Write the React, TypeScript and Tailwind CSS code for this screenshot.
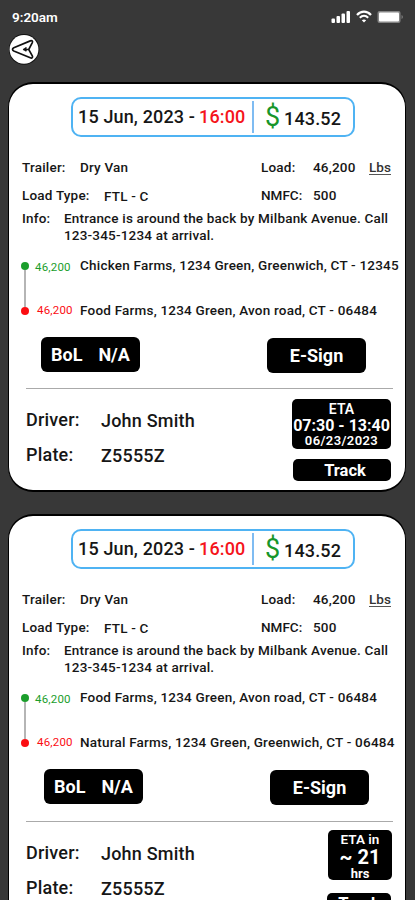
import type { ReactNode } from "react";

type Load = {
  from: string;
  to: string;
  actions: string;
  divider: string;
  eta: ReactNode;
};

const loads: Load[] = [
  {
    from: "Chicken Farms, 1234 Green, Greenwich, CT - 12345",
    to: "Food Farms, 1234 Green, Avon road, CT - 06484",
    actions: "pl-[32px]",
    divider: "mt-[15px]",
    eta: (
      <div className="flex w-[99px] flex-col items-end gap-2.5">
        <div className="flex h-[50px] w-[99px] flex-col items-center whitespace-nowrap rounded-[5px] bg-black pt-[3px] font-bold text-white">
          <span className="text-[14px] font-semibold leading-[15px]">ETA</span>
          <span className="text-[16px] leading-[17px]">07:30 - 13:40</span>
          <span className="text-[13px] font-semibold leading-[13px] tracking-[0.4px]">06/23/2023</span>
        </div>
        <div className="h-[22px] w-[98px] rounded-[5px] bg-black pl-1.5 text-center text-[16.5px] font-bold leading-[23px] text-white">
          Track
        </div>
      </div>
    ),
  },
  {
    from: "Food Farms, 1234 Green, Avon road, CT - 06484",
    to: "Natural Farms, 1234 Green, Greenwich, CT - 06484",
    actions: "pl-[35px]",
    divider: "mt-4",
    eta: (
      <div className="-mr-px -mt-0.5 flex w-[64px] flex-col gap-[13px]">
        <div className="flex h-[50px] w-[64px] flex-col items-center whitespace-nowrap rounded-[5px] bg-black pt-0.5 font-bold text-white">
          <span className="text-[13.5px] font-semibold leading-[14px]">ETA in</span>
          <span className="text-[20px] leading-[22px]">~ 21</span>
          <span className="text-[13px] leading-[11px]">hrs</span>
        </div>
        <div className="-ml-px h-[22px] w-[64px] rounded-[5px] bg-black text-center text-[16.5px] font-bold leading-[22px] text-white">
          Track
        </div>
      </div>
    ),
  },
];

function StatusBar() {
  return (
    <div className="flex h-[34px] items-end justify-between pl-3 pr-[11px] text-white">
      <span className="text-[13.5px] font-semibold leading-[34px]">9:20am</span>
      <div className="flex h-[26px] items-start gap-[5px]">
        <svg width="20" height="16" viewBox="0 0 20 16" fill="currentColor">
          <rect x="0.5" y="10.5" width="3.5" height="4.5" rx="1" />
          <rect x="5.5" y="8" width="3.5" height="7" rx="1" />
          <rect x="10.5" y="5.5" width="3.5" height="9.5" rx="1" />
          <rect x="15.5" y="3" width="3.5" height="12" rx="1" />
        </svg>
        <svg width="16" height="16" viewBox="0 0 16 16" fill="none" stroke="currentColor">
          <path d="M1 7C5 2.5 11 2.5 15 7" strokeWidth="2.2" />
          <path d="M3.8 9.8c2.5-2.6 5.9-2.6 8.4 0" strokeWidth="2" />
          <path d="M5.8 12.2 8 14.6l2.2-2.4c-1.3-1.1-3.1-1.1-4.4 0Z" fill="currentColor" stroke="none" />
        </svg>
        <svg width="27" height="16" viewBox="0 0 27 16">
          <rect x="0.5" y="3" width="23" height="12" rx="2" fill="#858585" />
          <rect x="2" y="4.5" width="20" height="9" rx="1" fill="#fff" />
          <path d="M24.5 7v4c2-.8 2-3.2 0-4Z" fill="#777" />
        </svg>
      </div>
    </div>
  );
}

function BackButton() {
  return (
    <button className="ml-[9px] block h-[31px] w-[31px]" aria-label="Back">
      <svg width="31" height="31" viewBox="0 0 31 31">
        <circle cx="15" cy="15.4" r="15.3" fill="#111" />
        <circle cx="15" cy="15.4" r="14.4" fill="#fff" />
        <path
          d="M3.5 15.3c0-.8.5-1.200 1.300-1.600L21.300 6.900c1.700-.7 2.700.2 2 1.700l-3.600 6.900 3.600 6.300c.8 1.600-.3 2.700-2 2L4.800 17c-.8-.4-1.300-.9-1.300-1.700Z"
          fill="none"
          stroke="#111"
          strokeWidth="1.7"
        />
        <path d="M19 15.500h-5M17.500 13.500l-2.500 2 2.500 1.500" fill="none" stroke="#111" strokeWidth="1.6" />
      </svg>
    </button>
  );
}

function LoadCard({ load }: { load: Load }) {
  return (
    <section className="h-[410px] w-[398px] shrink-0 whitespace-nowrap rounded-[25px] border-x border-y-2 border-black bg-white text-[13.5px] font-medium text-[#161616]">
      <div className="ml-[62px] mt-[13px] flex h-10 w-[284px] items-center rounded-[10px] border-2 border-[#4fb3f3] pl-[5px] text-[18px] tracking-[0.15px]">
        <span className="-mt-0.5 w-[121px]">15 Jun, 2023 -</span>
        <span className="-mt-0.5 w-[53px] text-[#f5141b]">16:00</span>
        <span className="h-[32px] w-0.5 bg-[#7fbcf2]" />
        <span className="ml-[11px] w-[19px] text-[27px] font-normal leading-none text-[#17962a]">$</span>
        <span className="pt-0.5">143.52</span>
      </div>

      <div className="mt-[22px] flex h-4 items-center pl-[13px] tracking-[0.2px]">
        <span className="w-[58px]">Trailer:</span>
        <span className="w-[181px]">Dry Van</span>
        <span className="w-[52px]">Load:</span>
        <span className="w-[56px]">46,200</span>
        <span className="h-[15px] border-b border-[#555] leading-[15px] tracking-normal text-[#333]">Lbs</span>
      </div>
      <div className="mt-3 flex h-4 items-center pl-[13px] tracking-[0.2px]">
        <span className="w-[82px]">Load Type:</span>
        <span className="w-[157px] pt-0.5">FTL - C</span>
        <span className="w-[52px] tracking-normal">NMFC:</span>
        <span>500</span>
      </div>
      <div className="mt-[7px] flex pl-[13px] leading-[17px] tracking-[0.19px]">
        <span className="w-[42px]">Info:</span>
        <p>
          Entrance is around the back by Milbank Avenue. Call
          <br />
          123-345-1234 at arrival.
        </p>
      </div>

      <div className="mt-[13px] flex h-[62px] pl-3">
        <div className="flex w-2 flex-col items-center pt-[5px]">
          <span className="h-2 w-2 rounded-full bg-[#1b9e2c]" />
          <span className="h-[37px] w-0.5 bg-[#b5b5b5]" />
          <span className="h-2 w-2 rounded-full bg-[#fb0d12]" />
        </div>
        <div className="ml-1.5 flex w-[45px] flex-col justify-between text-[11.5px] font-normal tracking-[0.2px]">
          <span className="leading-[20px] text-[#1b9e2c]">46,200</span>
          <span className="pl-0.5 leading-[18px] text-[#fb0d12]">46,200</span>
        </div>
        <div className="flex flex-col justify-between leading-[17px] tracking-[0.21px]">
          <span>{load.from}</span>
          <span>{load.to}</span>
        </div>
      </div>

      <div className={`mt-[18px] flex items-start gap-[127px] ${load.actions}`}>
        <button className="flex h-[35px] w-[99px] items-center gap-4 rounded-[6px] bg-black pl-2.5 text-[18px] font-bold text-white">
          <span>BoL</span>
          <span>N/A</span>
        </button>
        <button className="mt-px h-[35px] w-[99px] rounded-[6px] bg-black text-[18px] font-bold text-white">
          E-Sign
        </button>
      </div>

      <div className={`ml-[17px] h-px w-[367px] bg-[#aaa] ${load.divider}`} />

      <div className="mt-2.5 flex justify-between pl-[17px] pr-[14px] text-[18px]">
        <div className="flex flex-col pt-[9px] leading-[24px] tracking-[0.2px]">
          <div className="flex">
            <span className="w-[75px]">Driver:</span>
            <span className="pt-px">John Smith</span>
          </div>
          <div className="mt-2.5 flex">
            <span className="w-[75px]">Plate:</span>
            <span className="pt-px">Z5555Z</span>
          </div>
        </div>
        {load.eta}
      </div>
    </section>
  );
}

export default function App() {
  return (
    <main className="h-[900px] w-[415px] overflow-hidden bg-[#383838] font-['Roboto',sans-serif]">
      <StatusBar />
      <BackButton />
      <div className="mt-[17px] flex flex-col gap-[22px] pl-2">
        {loads.map((load) => (
          <LoadCard key={load.from} load={load} />
        ))}
      </div>
    </main>
  );
}
